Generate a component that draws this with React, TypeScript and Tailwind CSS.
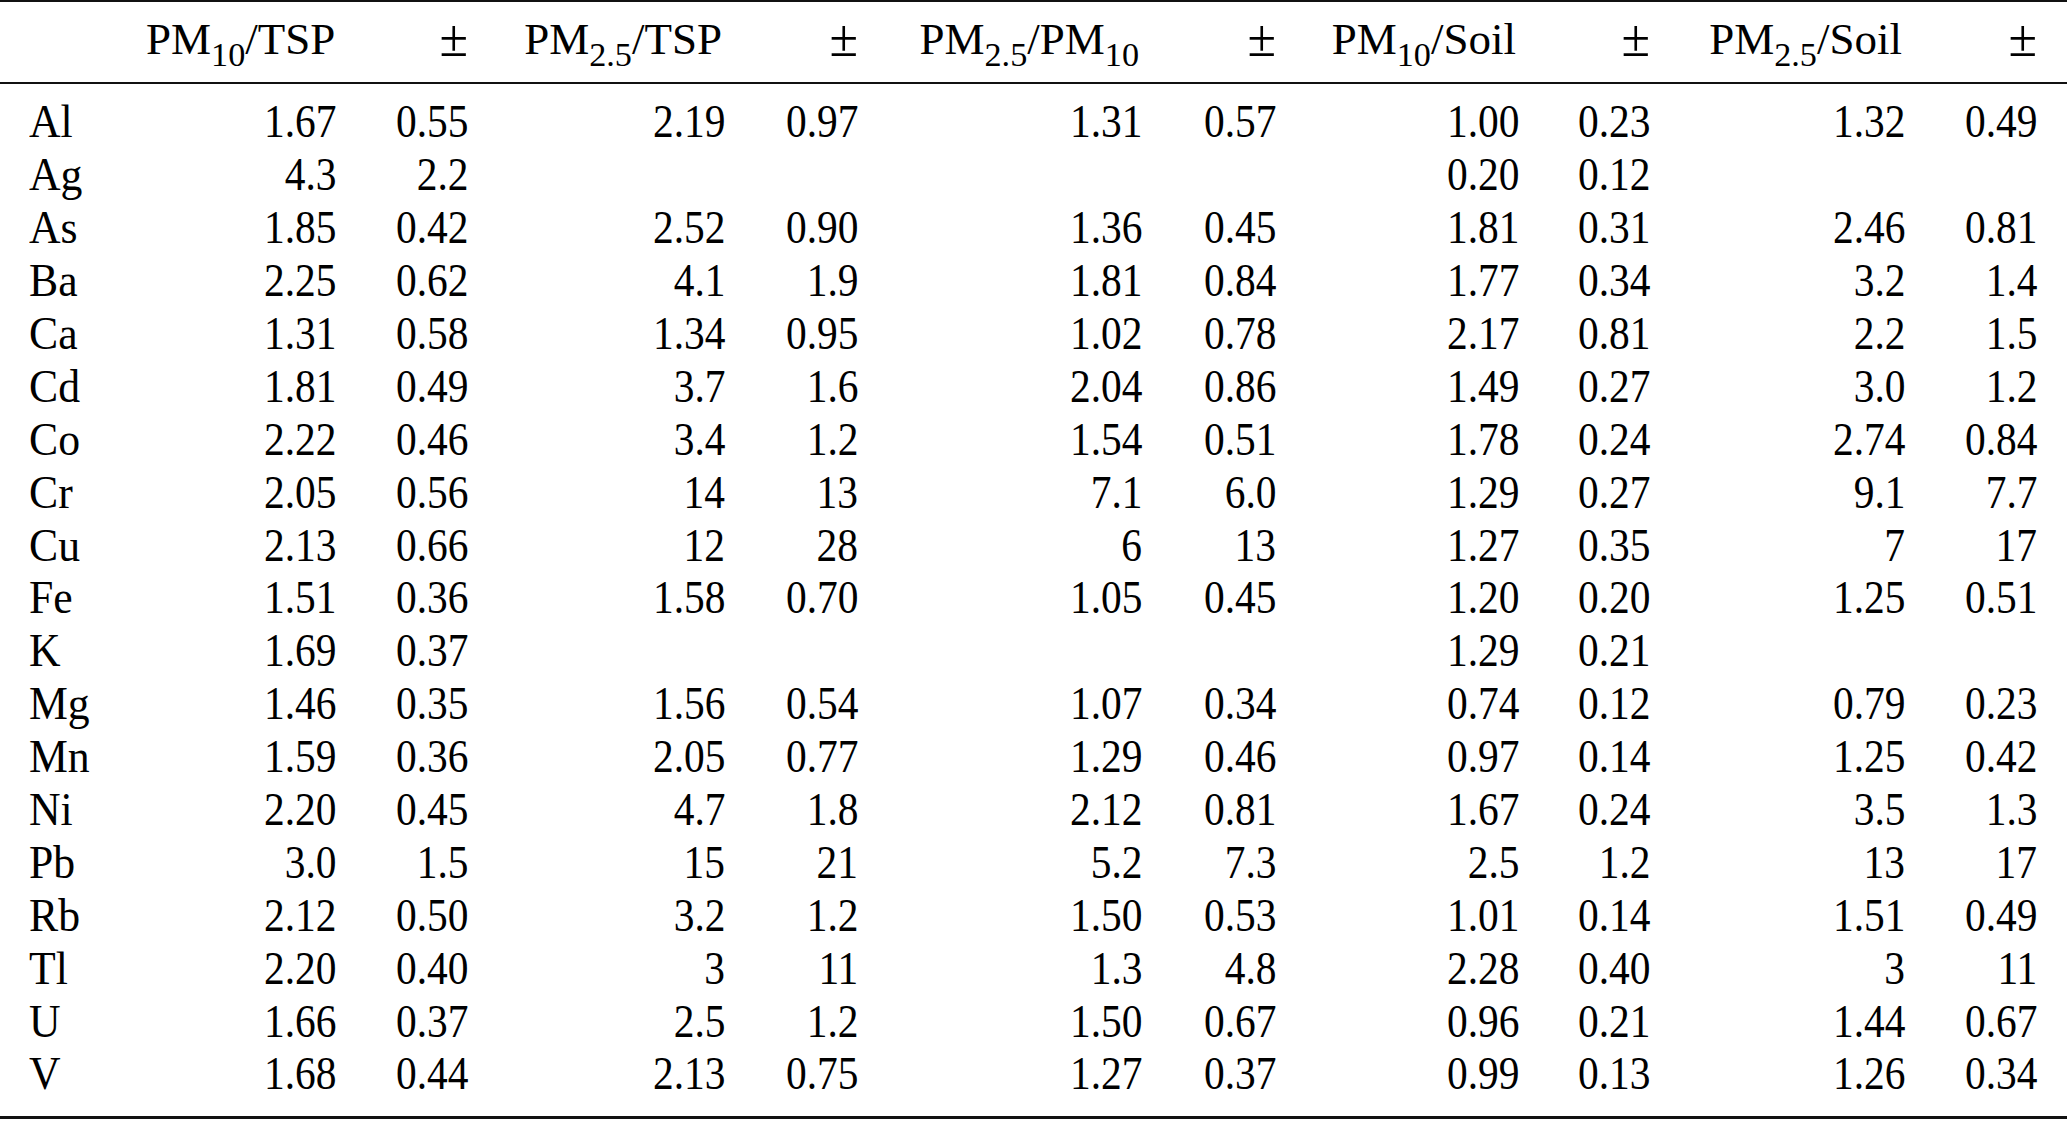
import { Fragment } from "react";

const rows: [string, ...string[]][] = [
  ["Al", "1.67", "0.55", "2.19", "0.97", "1.31", "0.57", "1.00", "0.23", "1.32", "0.49"],
  ["Ag", "4.3", "2.2", "", "", "", "", "0.20", "0.12", "", ""],
  ["As", "1.85", "0.42", "2.52", "0.90", "1.36", "0.45", "1.81", "0.31", "2.46", "0.81"],
  ["Ba", "2.25", "0.62", "4.1", "1.9", "1.81", "0.84", "1.77", "0.34", "3.2", "1.4"],
  ["Ca", "1.31", "0.58", "1.34", "0.95", "1.02", "0.78", "2.17", "0.81", "2.2", "1.5"],
  ["Cd", "1.81", "0.49", "3.7", "1.6", "2.04", "0.86", "1.49", "0.27", "3.0", "1.2"],
  ["Co", "2.22", "0.46", "3.4", "1.2", "1.54", "0.51", "1.78", "0.24", "2.74", "0.84"],
  ["Cr", "2.05", "0.56", "14", "13", "7.1", "6.0", "1.29", "0.27", "9.1", "7.7"],
  ["Cu", "2.13", "0.66", "12", "28", "6", "13", "1.27", "0.35", "7", "17"],
  ["Fe", "1.51", "0.36", "1.58", "0.70", "1.05", "0.45", "1.20", "0.20", "1.25", "0.51"],
  ["K", "1.69", "0.37", "", "", "", "", "1.29", "0.21", "", ""],
  ["Mg", "1.46", "0.35", "1.56", "0.54", "1.07", "0.34", "0.74", "0.12", "0.79", "0.23"],
  ["Mn", "1.59", "0.36", "2.05", "0.77", "1.29", "0.46", "0.97", "0.14", "1.25", "0.42"],
  ["Ni", "2.20", "0.45", "4.7", "1.8", "2.12", "0.81", "1.67", "0.24", "3.5", "1.3"],
  ["Pb", "3.0", "1.5", "15", "21", "5.2", "7.3", "2.5", "1.2", "13", "17"],
  ["Rb", "2.12", "0.50", "3.2", "1.2", "1.50", "0.53", "1.01", "0.14", "1.51", "0.49"],
  ["Tl", "2.20", "0.40", "3", "11", "1.3", "4.8", "2.28", "0.40", "3", "11"],
  ["U", "1.66", "0.37", "2.5", "1.2", "1.50", "0.67", "0.96", "0.21", "1.44", "0.67"],
  ["V", "1.68", "0.44", "2.13", "0.75", "1.27", "0.37", "0.99", "0.13", "1.26", "0.34"],
];

// fixed column widths so the right edges line up with the source table
const grid =
  "grid grid-cols-[146px_190px_132px_257px_133px_284px_134px_243px_131px_255px_132px]";

const Sub = ({ children }: { children: string }) => (
  <sub className="text-[0.76em] bottom-[-0.36em]">{children}</sub>
);

const Pm = ({ n }: { n: string }) => (
  <>
    PM<Sub>{n}</Sub>
  </>
);

const headers = [
  <><Pm n="10" />/TSP</>,
  <><Pm n="2.5" />/TSP</>,
  <><Pm n="2.5" />/<Pm n="10" /></>,
  <><Pm n="10" />/Soil</>,
  <><Pm n="2.5" />/Soil</>,
];

export default function App() {
  return (
    <div className="w-[2067px] h-[1121px] bg-white text-black font-['Liberation_Serif',serif] text-[46px] leading-none">
      <div className="border-t-2 border-[#111]" />
      <div className={`${grid} h-[82px] items-center pb-[6px] border-b-2 border-[#111]`}>
        <div />
        {headers.map((h, i) => (
          <Fragment key={i}>
            <div className="text-right whitespace-nowrap text-[45px] pr-[3px]">{h}</div>
            <div className="text-right text-[52px]">±</div>
          </Fragment>
        ))}
      </div>
      <div className="pt-[12px]">
        {rows.map((r) => (
          <div key={r[0]} className={`${grid} h-[52.9px] items-center`}>
            <div className="pl-[29px]">
              <span className="inline-block scale-x-95 origin-left">{r[0]}</span>
            </div>
            {r.slice(1).map((v, i) => (
              <div key={i} className="text-right">
                <span className="inline-block scale-x-90 origin-right">{v}</span>
              </div>
            ))}
          </div>
        ))}
      </div>
      <div className="mt-[15px] border-t-[3px] border-[#111]" />
    </div>
  );
}
